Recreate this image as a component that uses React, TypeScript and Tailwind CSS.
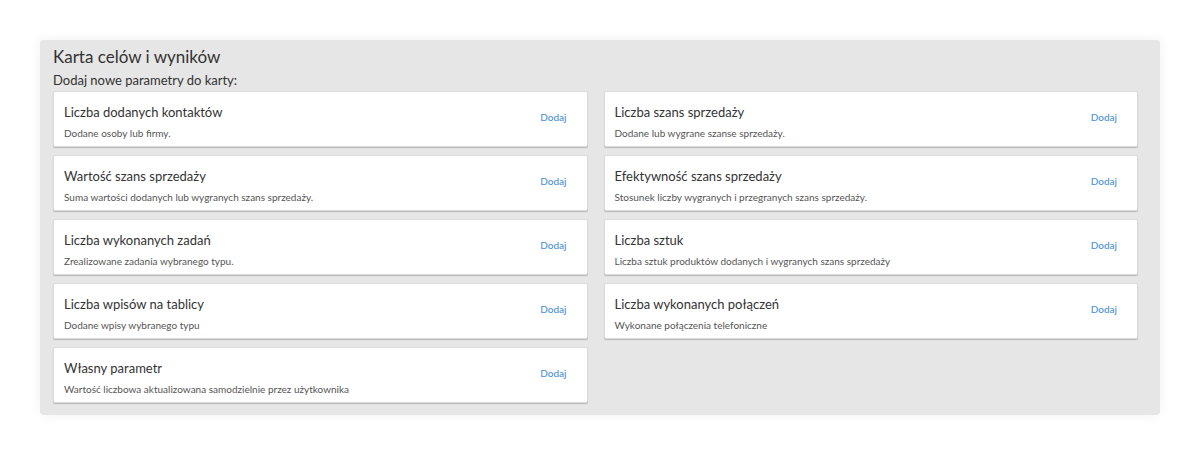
import React from 'react';

interface Param {
  title: string;
  desc: string;
}

const left: Param[] = [
  { title: 'Liczba dodanych kontaktów', desc: 'Dodane osoby lub firmy.' },
  { title: 'Wartość szans sprzedaży', desc: 'Suma wartości dodanych lub wygranych szans sprzedaży.' },
  { title: 'Liczba wykonanych zadań', desc: 'Zrealizowane zadania wybranego typu.' },
  { title: 'Liczba wpisów na tablicy', desc: 'Dodane wpisy wybranego typu' },
  { title: 'Własny parametr', desc: 'Wartość liczbowa aktualizowana samodzielnie przez użytkownika' },
];

const right: Param[] = [
  { title: 'Liczba szans sprzedaży', desc: 'Dodane lub wygrane szanse sprzedaży.' },
  { title: 'Efektywność szans sprzedaży', desc: 'Stosunek liczby wygranych i przegranych szans sprzedaży.' },
  { title: 'Liczba sztuk', desc: 'Liczba sztuk produktów dodanych i wygranych szans sprzedaży' },
  { title: 'Liczba wykonanych połączeń', desc: 'Wykonane połączenia telefoniczne' },
];

const ParamCard: React.FC<Param> = ({ title, desc }) => (
  <div className="h-[56px] flex items-center justify-between bg-white border border-[#dcdcdc] rounded-[2px] shadow-[0_1px_1px_rgba(0,0,0,0.22)] pl-[10px] pr-[20px]">
    <div className="flex flex-col mt-[4px]">
      <span className="text-[13px] leading-[18px] text-[#333]">{title}</span>
      <span className="text-[10px] leading-[14px] text-[#555] mt-[5px]">{desc}</span>
    </div>
    <button className="text-[10px] text-[#4a90d9] font-medium mb-[3px]">Dodaj</button>
  </div>
);

export default function App() {
  return (
    <div className="w-[1200px] h-[464px] bg-white pt-[40px] px-[40px]" style={{ fontFamily: '"Lato", "Open Sans", sans-serif' }}>
      <div className="w-[1120px] h-[375px] bg-[#e6e6e6] rounded-[4px] shadow-[0_0_12px_rgba(0,0,0,0.06)] pt-[6px] pl-[13px] pr-[22px]">
        <h1 className="text-[17px] leading-[22px] text-[#333]">Karta celów i wyników</h1>
        <p className="text-[13px] leading-[18px] text-[#333] mt-[3px]">Dodaj nowe parametry do karty:</p>
        <div className="grid grid-cols-2 gap-x-[16px] mt-[2px]">
          <div className="flex flex-col gap-[8px]">
            {left.map((p) => <ParamCard key={p.title} {...p} />)}
          </div>
          <div className="flex flex-col gap-[8px]">
            {right.map((p) => <ParamCard key={p.title} {...p} />)}
          </div>
        </div>
      </div>
    </div>
  );
}
